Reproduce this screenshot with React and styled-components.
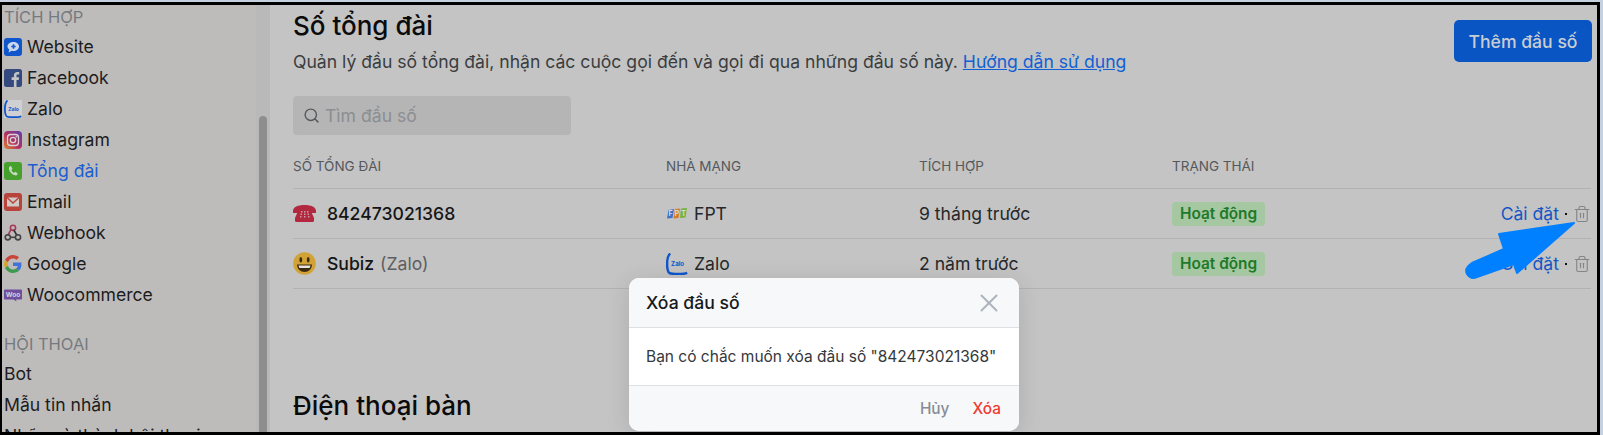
import React from "react";
import styled, { createGlobalStyle } from "styled-components";
import { Search, X, Trash2 } from "lucide-react";

const Global = createGlobalStyle`
  html, body { margin: 0; padding: 0; background: #c5d0e0; overflow: hidden; }
  body { font-family: Inter, "Noto Sans", sans-serif; }
  * { box-sizing: border-box; }
`;

const Frame = styled.div`
  position: relative;
  width: 1600px;
  height: 433px;
  margin-top: 2px;
  border: 3px solid #000;
  border-left-width: 2px;
  display: flex;
  overflow: hidden;
  background: #c4c4c4;
`;
const Sidebar = styled.aside`
  width: 254px;
  flex: none;
  background: #bebcba;
  padding: 2px 0 0 2px;
  overflow: hidden;
  display: flex;
  flex-direction: column;
`;
const SectionLabel = styled.div`
  font-size: 16.5px;
  line-height: 20px;
  color: #767a7e;
  margin-top: ${(p) => p.$mt || 0}px;
  margin-bottom: ${(p) => p.$mb || 0}px;
  white-space: nowrap;
`;
const NavItem = styled.div`
  height: 31px;
  flex: none;
  display: flex;
  align-items: center;
  gap: 5px;
  font-size: 17.6px;
  color: ${(p) => (p.$active ? "#1a5ed0" : "#1c1c1e")};
  white-space: nowrap;
`;
const IconBox = styled.span`
  width: 18px;
  height: 18px;
  flex: none;
  display: inline-flex;
`;
const ScrollTrack = styled.div`
  width: 14px;
  flex: none;
  background: #b9b9b9;
  padding: 111px 3px 0;
  overflow: hidden;
`;
const ScrollThumb = styled.div`
  height: 400px;
  border-radius: 4px;
  background: #8e8e8e;
`;
const Main = styled.main`
  flex: 1;
  min-width: 0;
  padding: 2px 5px 0 23px;
  overflow: hidden;
`;
const Head = styled.div`
  display: flex;
  justify-content: space-between;
  align-items: flex-start;
`;
const Title = styled.h1`
  margin: 0;
  font-size: 26px;
  line-height: 38px;
  font-weight: 500;
  color: #0b0b0b;
`;
const Desc = styled.p`
  margin: 5px 0 0;
  font-size: 17.6px;
  line-height: 24px;
  color: #3a3d40;
  white-space: nowrap;
`;
const HelpLink = styled.a`
  color: #1160d4;
  text-decoration: underline;
`;
const AddButton = styled.button`
  width: 138px;
  height: 42px;
  margin-top: 13px;
  border: 0;
  border-radius: 5px;
  background: #0a55c4;
  color: #c9cdd3;
  font: 500 17.6px Inter, sans-serif;
`;
const SearchBox = styled.div`
  width: 278px;
  height: 39px;
  margin-top: 22px;
  padding-left: 10px;
  border-radius: 4px;
  background: #b5b5b5;
  display: flex;
  align-items: center;
  gap: 5px;
  color: #55585c;
  font-size: 17.6px;
`;
const Placeholder = styled.span`
  color: #8b8e92;
`;
const Row = styled.div`
  display: grid;
  grid-template-columns: 373px 253px 253px 1fr auto;
  align-items: center;
  height: ${(p) => p.$h}px;
  border-bottom: 1px solid #b2b2b2;
  width: 1298px;
`;
const HeadRow = styled(Row)`
  margin-top: 13px;
  font-size: 13.5px;
  color: #55585c;
  padding-bottom: 5px;
`;
const Cell = styled.div`
  display: flex;
  align-items: center;
  gap: ${(p) => p.$gap || 0}px;
  font-size: 17.6px;
  color: #26282b;
  white-space: nowrap;
`;
const Strong = styled.span`
  font-weight: 450;
  color: #151515;
`;
const Muted = styled.span`
  color: #5e5e5e;
  margin-left: 6px;
`;
const Badge = styled.span`
  height: 24px;
  padding: 0 8px;
  display: inline-flex;
  align-items: center;
  border-radius: 4px;
  background: #a5c7a2;
  color: #1e7a28;
  font-size: 15.4px;
  font-weight: 600;
`;
const Actions = styled.div`
  display: flex;
  align-items: center;
  color: #1356c4;
  font-size: 17.6px;
`;
const Dot = styled.span`
  width: 2px;
  height: 2px;
  background: #111;
  margin: 0 6px 0 6px;
`;
const SectionTitle = styled(Title)`
  margin-top: 98px;
`;
const Modal = styled.div`
  position: absolute;
  left: 627px;
  top: 273px;
  width: 390px;
  height: 153px;
  border-radius: 10px;
  overflow: hidden;
  background: #fff;
  display: flex;
  flex-direction: column;
  box-shadow: 0 4px 24px rgba(0, 0, 0, 0.12);
`;
const ModalHead = styled.div`
  height: 50px;
  flex: none;
  padding: 0 15px 0 17px;
  background: #f7f8fa;
  border-bottom: 1px solid #dde1e6;
  display: flex;
  align-items: center;
  justify-content: space-between;
  font-size: 17.6px;
  font-weight: 500;
  color: #16181a;
`;
const ModalBody = styled.div`
  flex: 1;
  padding: 0 17px;
  display: flex;
  align-items: center;
  font-size: 15.5px;
  color: #35383b;
  white-space: nowrap;
`;
const ModalFoot = styled.div`
  height: 46px;
  flex: none;
  padding: 0 18px;
  background: #f7f8fa;
  border-top: 1px solid #dde1e6;
  display: flex;
  align-items: center;
  justify-content: flex-end;
  gap: 23px;
  font-size: 15.4px;
  font-weight: 500;
`;
const Cancel = styled.span`
  color: #868c94;
`;
const Confirm = styled.span`
  color: #ee3b32;
`;
const Arrow = styled.svg`
  position: absolute;
  left: 0;
  top: 0;
  pointer-events: none;
`;

const WebsiteIcon = () => (
  <svg width="18" height="18" viewBox="0 0 18 18">
    <rect width="18" height="18" rx="3" fill="#0f55cc" />
    <path d="M9.500 4c3 0 5.500 1.900 5.500 4.500S12.500 13 9.500 13c-.7 0-1.300-.1-1.900-.3L4.500 14.500l.8-3C4 10.600 3.500 9.600 3.500 8.500 3.500 5.900 6 4 9.500 4z" fill="#c9d6ee" />
    <path d="M9.500 6.300v4.400M7.300 8.500h4.400" stroke="#0f55cc" strokeWidth="1.600" />
  </svg>
);
const FacebookIcon = () => (
  <svg width="18" height="18" viewBox="0 0 18 18">
    <rect width="18" height="18" rx="2.500" fill="#33497f" />
    <path d="M12.500 18v-7h2.200l.4-2.700h-2.600V6.800c0-.8.300-1.300 1.300-1.300h1.400V3.100c-.3 0-1-.1-1.900-.1-2 0-3.400 1.200-3.400 3.500v1.800H7.600V11h2.300v7z" fill="#c4c4c6" />
  </svg>
);
const ZaloIcon = ({ size = 18, bg = "#cfd0d2", strokeW = 1.8 }) => (
  <svg width={size} height={size} viewBox="0 0 18 18">
    <rect width="18" height="18" fill={bg} />
    <path d="M3.500.500C1.500 2 .900 4.500.900 9c0 4 .600 6.500 2 7.500 1.500.700 4.500.700 7 .700 3 0 6-.1 7.400-1" fill="none" stroke="#0f55cc" strokeWidth={strokeW} />
    <text x="9.500" y="10.500" textAnchor="middle" fontFamily="Inter, sans-serif" fontSize="5" fontWeight="700" fill="#0f55cc">Zalo</text>
  </svg>
);
const InstagramIcon = () => (
  <svg width="18" height="18" viewBox="0 0 18 18">
    <defs>
      <linearGradient id="ig" x1="0" y1="1" x2="1" y2="0">
        <stop offset="0" stopColor="#d98a2c" />
        <stop offset=".45" stopColor="#b53060" />
        <stop offset="1" stopColor="#5b3fae" />
      </linearGradient>
    </defs>
    <rect width="18" height="18" rx="4" fill="url(#ig)" />
    <rect x="3.500" y="3.500" width="11" height="11" rx="3" fill="none" stroke="#d8d4d6" strokeWidth="1.300" />
    <circle cx="9" cy="9" r="2.700" fill="none" stroke="#d8d4d6" strokeWidth="1.300" />
    <circle cx="12.300" cy="5.700" r=".8" fill="#d8d4d6" />
  </svg>
);
const PhoneIcon = () => (
  <svg width="18" height="18" viewBox="0 0 18 18">
    <rect width="18" height="18" rx="3" fill="#46a02c" />
    <path d="M6.500 4 5 5.200c-.3 2 .4 3.900 1.900 5.500 1.500 1.700 3.400 2.700 5.400 2.800l1.300-1.500c.2-.3.200-.6-.1-.8l-2-1.300c-.3-.2-.5-.1-.7.100l-.8.900C8.800 10.300 7.800 9.200 7.300 8l.9-.8c.2-.2.300-.4.100-.7L7.200 4.200c-.2-.3-.5-.4-.7-.2z" fill="#c8d8c2" />
  </svg>
);
const EmailIcon = () => (
  <svg width="18" height="18" viewBox="0 0 18 18">
    <rect width="18" height="18" rx="3" fill="#b8433a" />
    <rect x="3" y="4.500" width="12" height="9" fill="#d0c8c4" />
    <path d="M3 4.500 9 10l6-5.500" fill="none" stroke="#b8433a" strokeWidth="1.300" />
  </svg>
);
const WebhookIcon = () => (
  <svg width="18" height="18" viewBox="0 0 18 18" fill="none" strokeWidth="1.600">
    <circle cx="9" cy="3.800" r="2.600" stroke="#a83a58" />
    <path d="M9.800 6 13 11.500" stroke="#333" />
    <path d="M7 5.500 3.800 11.300" stroke="#a83a58" />
    <circle cx="3.800" cy="13.300" r="2.600" stroke="#444" />
    <circle cx="14" cy="13.300" r="2.600" stroke="#444" />
    <path d="M6.300 13.300h5.300" stroke="#444" />
  </svg>
);
const GoogleIcon = () => (
  <svg width="18" height="18" viewBox="0 0 48 48">
    <path fill="#c9443a" d="M24 9.500c3.500 0 6.700 1.200 9.200 3.600l6.800-6.800C35.900 2.400 30.500 0 24 0 14.600 0 6.500 5.400 2.600 13.200l7.900 6.100C12.400 13.700 17.700 9.500 24 9.500z" />
    <path fill="#3f73d8" d="M46.500 24.500c0-1.600-.1-3.100-.4-4.500H24v9h12.700c-.5 2.900-2.200 5.400-4.700 7l7.700 6c4.500-4.200 6.800-10.300 6.800-17.500z" />
    <path fill="#d4a52a" d="M10.500 28.700c-.5-1.400-.8-3-.8-4.700s.3-3.300.8-4.700l-7.900-6.100C.9 16.500 0 20.100 0 24s.9 7.500 2.600 10.800z" />
    <path fill="#3f9a4f" d="M24 48c6.500 0 11.900-2.100 15.900-5.800l-7.700-6c-2.200 1.500-4.900 2.300-8.200 2.300-6.300 0-11.600-4.200-13.500-9.900l-7.900 6.100C6.500 42.600 14.600 48 24 48z" />
  </svg>
);
const WooIcon = () => (
  <svg width="18" height="18" viewBox="0 0 18 18">
    <path d="M1 3.500h16a1 1 0 0 1 1 1v8a1 1 0 0 1-1 1h-5l.5 2-3-2H1a1 1 0 0 1-1-1v-8a1 1 0 0 1 1-1z" fill="#6d4f9e" />
    <text x="9" y="11" textAnchor="middle" fontFamily="Inter, sans-serif" fontSize="6.500" fontWeight="700" fill="#d4d0dc">Woo</text>
  </svg>
);
const TelephoneIcon = () => (
  <svg width="23" height="17" viewBox="0 0 23 17">
    <path d="M0 6C0 2 5 0 11.500 0S23 2 23 6v2h-6V5H6v3H0z" fill="#b2283f" />
    <path d="M5.500 5h12L21 13v2.500a1.500 1.500 0 0 1-1.500 1.500h-16A1.500 1.500 0 0 1 2 15.500V13z" fill="#b2283f" />
    <g fill="#c79aa2">
      <rect x="8" y="6" width="1.500" height="1.500" /><rect x="11" y="6" width="1.500" height="1.500" /><rect x="14" y="6" width="1.500" height="1.500" />
      <rect x="7.500" y="8.500" width="1.500" height="1.500" /><rect x="11" y="8.500" width="1.500" height="1.500" /><rect x="14.500" y="8.500" width="1.500" height="1.500" />
      <rect x="7" y="11" width="1.500" height="1.500" /><rect x="11" y="11" width="1.500" height="1.500" /><rect x="15" y="11" width="1.500" height="1.500" />
    </g>
  </svg>
);
const SmileIcon = () => (
  <svg width="23" height="23" viewBox="0 0 23 23">
    <circle cx="11.500" cy="11.500" r="11.300" fill="#d1a235" />
    <ellipse cx="7.800" cy="7.800" rx="1.400" ry="2.700" fill="#3a2a10" />
    <ellipse cx="15.200" cy="7.800" rx="1.400" ry="2.700" fill="#3a2a10" />
    <path d="M4 12.500h15c0 4.500-3.500 7.500-7.500 7.500S4 17 4 12.500z" fill="#3a2a10" />
    <path d="M5.500 13.500h12c-.2 1.200-.5 2-1 2.500h-10c-.5-.5-.8-1.300-1-2.500z" fill="#e8e4dc" />
  </svg>
);
const FptIcon = () => (
  <svg width="22" height="11" viewBox="0 0 22 11">
    <path d="M2.500 2 8 1 6.500 10 1 10.500z" fill="#3d72c8" />
    <path d="M9 1l5-.5L12.500 10 7.500 10.500z" fill="#d8792a" />
    <path d="M15 .500 21 0l-1.500 9.500-5.500.5z" fill="#74b43a" />
    <g fontFamily="Inter, sans-serif" fontSize="7" fontWeight="700" fill="#d6dbe0" textAnchor="middle">
      <text x="4.500" y="8">F</text>
      <text x="11" y="8">P</text>
      <text x="17.500" y="8">T</text>
    </g>
  </svg>
);

const items = [
  ["Website", WebsiteIcon],
  ["Facebook", FacebookIcon],
  ["Zalo", ZaloIcon],
  ["Instagram", InstagramIcon],
  ["Tổng đài", PhoneIcon, true],
  ["Email", EmailIcon],
  ["Webhook", WebhookIcon],
  ["Google", GoogleIcon],
  ["Woocommerce", WooIcon],
];

const NumberRow = ({ icon, name, muted, carrierIcon, carrier, time }) => (
  <Row $h={50}>
    <Cell $gap={11}>
      {icon}
      <span>
        <Strong>{name}</Strong>
        {muted && <Muted>{muted}</Muted>}
      </span>
    </Cell>
    <Cell $gap={6}>
      {carrierIcon}
      {carrier}
    </Cell>
    <Cell>{time}</Cell>
    <Cell><Badge>Hoạt động</Badge></Cell>
    <Actions>
      Cài đặt<Dot />
      <Trash2 size={18} color="#858585" strokeWidth={1.5} />
    </Actions>
  </Row>
);

export default function App() {
  return (
    <>
      <Global />
      <Frame>
        <Sidebar>
          <SectionLabel $mb={4}>TÍCH HỢP</SectionLabel>
          {items.map(([label, Icon, active]) => (
            <NavItem key={label} $active={active}>
              <IconBox><Icon /></IconBox>
              {label}
            </NavItem>
          ))}
          <SectionLabel $mt={24} $mb={4}>HỘI THOẠI</SectionLabel>
          <NavItem>Bot</NavItem>
          <NavItem>Mẫu tin nhắn</NavItem>
          <NavItem>Nhãn và thành hội thoại</NavItem>
        </Sidebar>
        <ScrollTrack><ScrollThumb /></ScrollTrack>
        <Main>
          <Head>
            <div>
              <Title>Số tổng đài</Title>
              <Desc>
                Quản lý đầu số tổng đài, nhận các cuộc gọi đến và gọi đi qua những đầu số này.{" "}
                <HelpLink>Hướng dẫn sử dụng</HelpLink>
              </Desc>
            </div>
            <AddButton>Thêm đầu số</AddButton>
          </Head>
          <SearchBox>
            <Search size={17} strokeWidth={2} />
            <Placeholder>Tìm đầu số</Placeholder>
          </SearchBox>
          <HeadRow $h={41}>
            <div>SỐ TỔNG ĐÀI</div>
            <div>NHÀ MẠNG</div>
            <div>TÍCH HỢP</div>
            <div>TRẠNG THÁI</div>
            <div />
          </HeadRow>
          <NumberRow icon={<TelephoneIcon />} name="842473021368" carrierIcon={<FptIcon />} carrier="FPT" time="9 tháng trước" />
          <NumberRow icon={<SmileIcon />} name="Subiz" muted="(Zalo)" carrierIcon={<ZaloIcon size={22} bg="#c4c4c4" strokeW={2} />} carrier="Zalo" time="2 năm trước" />
          <SectionTitle>Điện thoại bàn</SectionTitle>
        </Main>
        <Modal>
          <ModalHead>
            Xóa đầu số
            <X size={30} color="#adb4bb" strokeWidth={1.6} />
          </ModalHead>
          <ModalBody>Bạn có chắc muốn xóa đầu số "842473021368"</ModalBody>
          <ModalFoot>
            <Cancel>Hủy</Cancel>
            <Confirm>Xóa</Confirm>
          </ModalFoot>
        </Modal>
        <Arrow width="1598" height="428" viewBox="2 5 1598 428">
          <path d="M1574 223 1499 234 1504 249 1472 263Q1464 268 1467 274 1471 280 1477 277L1514 264 1517 273z" fill="#0080ff" stroke="#0080ff" strokeWidth="2" strokeLinejoin="round" />
        </Arrow>
      </Frame>
    </>
  );
}
